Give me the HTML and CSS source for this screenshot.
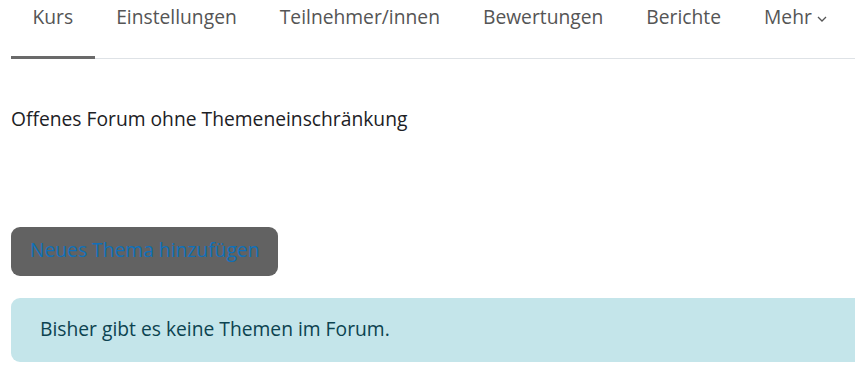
FILE: index.html
```html
<!DOCTYPE html>
<html lang="de">
<head>
  <meta charset="UTF-8">
  <title>Forum</title>
  <link rel="stylesheet" href="styles.css">
</head>
<body>
  <nav class="tabs">
    <a class="tab active" href="#">Kurs</a>
    <a class="tab" href="#">Einstellungen</a>
    <a class="tab" href="#">Teilnehmer/innen</a>
    <a class="tab" href="#">Bewertungen</a>
    <a class="tab" href="#">Berichte</a>
    <a class="tab" href="#">Mehr
      <svg class="chev" width="10" height="6" viewBox="0 0 10 6"><path d="M1 1l4 4 4-4" fill="none" stroke="#555" stroke-width="1.3"/></svg>
    </a>
  </nav>

  <main class="content">
    <p class="intro">Offenes Forum ohne Themeneinschränkung</p>
    <a class="btn" href="#">Neues Thema hinzufügen</a>
    <div class="alert">Bisher gibt es keine Themen im Forum.</div>
  </main>
</body>
</html>
```

FILE: styles.css
```css
body {
  margin: 0;
  font-family: "Open Sans", "Noto Sans", sans-serif;
  font-size: 19.25px;
  color: #1d2125;
  background: #fff;
  overflow: hidden;
}

.tabs {
  display: flex;
  margin-left: 11px;
  border-bottom: 1px solid #dee2e6;
  height: 59px;
  box-sizing: border-box;
}

.tab {
  display: flex;
  align-items: flex-start;
  padding: 3px 21.5px 0;
  color: #555;
  text-decoration: none;
  border-bottom: 3px solid transparent;
  margin-bottom: -1px;
  white-space: nowrap;
}

.tab.active {
  border-bottom-color: #6a6a6a;
}

.chev {
  margin: 13px 0 0 5px;
}

.content {
  padding: 0 0 0 11px;
}

.intro {
  margin: 46px 0 0;
  line-height: 27px;
}

.btn {
  display: block;
  margin-top: 95px;
  width: 267px;
  height: 49px;
  box-sizing: border-box;
  padding: 9px 0 0 19px;
  background: #626262;
  color: #1070b8;
  border-radius: 9px;
  text-decoration: none;
}

.alert {
  margin-top: 22px;
  margin-right: -20px;
  height: 64px;
  box-sizing: border-box;
  padding: 17px 29px;
  background: #c4e5ea;
  color: #0c4350;
  border-radius: 9px;
}
```
